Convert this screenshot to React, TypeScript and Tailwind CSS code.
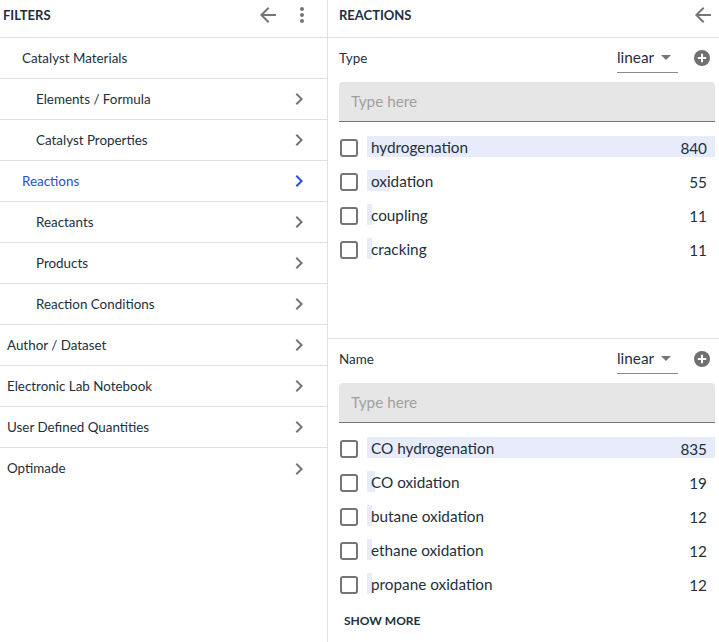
import React from "react";

const font = "font-['Lato','Noto_Sans',sans-serif]";

function Chevron({ blue }: { blue?: boolean }) {
  return (
    <svg width="24" height="24" viewBox="0 0 24 24" fill={blue ? "#2a4cdf" : "#757575"}>
      <path d="M10 6 8.59 7.41 13.17 12l-4.58 4.59L10 18l6-6z" />
    </svg>
  );
}

function ArrowBack() {
  return (
    <svg width="24" height="24" viewBox="0 0 24 24" fill="#757575">
      <path d="M20 11H7.83l5.59-5.59L12 4l-8 8 8 8 1.41-1.41L7.83 13H20v-2z" />
    </svg>
  );
}

function Dots() {
  return (
    <svg width="24" height="24" viewBox="0 0 24 24" fill="#757575">
      <path d="M12 8c1.1 0 2-.9 2-2s-.9-2-2-2-2 .9-2 2 .9 2 2 2zm0 2c-1.1 0-2 .9-2 2s.9 2 2 2 2-.9 2-2-.9-2-2-2zm0 6c-1.1 0-2 .9-2 2s.9 2 2 2 2-.9 2-2-.9-2-2-2z" />
    </svg>
  );
}

function Row({ label, indent, blue, noChevron, last }: { label: string; indent: string; blue?: boolean; noChevron?: boolean; last?: boolean }) {
  return (
    <div className={`h-[41px] shrink-0 flex items-center justify-between pr-[16px] ${last ? "" : "border-b border-[#e0e0e0]"} ${indent}`}>
      <span className={`text-[13.4px] ${blue ? "text-[#2a4cdf]" : "text-[#22303e]"}`}>{label}</span>
      {!noChevron && <Chevron blue={blue} />}
    </div>
  );
}

function Item({ label, count, pct }: { label: string; count: number; pct: number }) {
  return (
    <div className="h-[34px] flex items-center pl-[12px] pr-[4px]">
      <span className="w-[18px] h-[18px] mb-[1px] border-2 border-[#757575] rounded-[3px] shrink-0" />
      <div className="relative ml-[9px] flex-1 h-[21px] mb-[3px] flex items-center justify-between pl-[4px] pr-[8px]">
        <span className="absolute left-0 top-0 bottom-0 bg-[#e8ebfa]" style={{ width: `${pct}%` }} />
        <span className="relative top-[1px] text-[15.3px] text-[#22303e]">{label}</span>
        <span className="relative top-[2px] text-[15.3px] text-[#22303e]">{count}</span>
      </div>
    </div>
  );
}

function Facet({ title, items, more }: { title: string; items: [string, number, number][]; more?: boolean }) {
  return (
    <div className="flex flex-col">
      <div className="h-[44px] flex items-start pl-[11px] pr-[8px]">
        <span className="text-[13.4px] text-[#22303e] mt-[10px]">{title}</span>
        <div className="ml-auto mt-[8px] w-[61px] h-[27px] border-b border-[#8a8a8a] flex items-center justify-between pr-[7px] pb-[3px]">
          <span className="text-[15.3px] text-[#22303e]">linear</span>
          <span className="w-0 h-0 border-x-[5px] border-x-transparent border-t-[5px] border-t-[#757575]" />
        </div>
        <svg className="ml-[15px] mt-[11px]" width="18" height="18" viewBox="0 0 18 18">
          <circle cx="9" cy="9" r="8" fill="#707070" />
          <path d="M8 4.8h2V8h3.2v2H10v3.2H8V10H4.8V8H8z" fill="#ffffff" />
        </svg>
      </div>
      <div className="ml-[11px] mr-[4px] h-[40px] bg-[#e6e6e6] rounded-t-[4px] border-b border-[#757575] flex items-center pl-[12px]">
        <span className="text-[15.3px] text-[#a0a0a0]">Type here</span>
      </div>
      <div className="mt-[9px] flex flex-col">
        {items.map(([l, c, p]) => (
          <Item key={l} label={l} count={c} pct={p} />
        ))}
      </div>
      {more && <span className="ml-[16px] mt-[10px] text-[12px] font-bold text-[#22303e]">SHOW MORE</span>}
    </div>
  );
}

export default function App() {
  return (
    <div className={`w-[719px] h-[642px] flex bg-white overflow-hidden ${font}`}>
      <div className="w-[328px] shrink-0 border-r border-[#e0e0e0] flex flex-col">
        <div className="h-[38px] shrink-0 border-b border-[#e0e0e0] flex items-start pt-[3px] pl-[3px] pr-[13px]">
          <span className="text-[13px] font-bold leading-[24px] text-[#22303e]">FILTERS</span>
          <div className="ml-auto flex items-center gap-[10px]">
            <ArrowBack />
            <Dots />
          </div>
        </div>
        <Row label="Catalyst Materials" indent="pl-[22px]" noChevron />
        <Row label="Elements / Formula" indent="pl-[36px]" />
        <Row label="Catalyst Properties" indent="pl-[36px]" />
        <Row label="Reactions" indent="pl-[22px]" blue />
        <Row label="Reactants" indent="pl-[36px]" />
        <Row label="Products" indent="pl-[36px]" />
        <Row label="Reaction Conditions" indent="pl-[36px]" />
        <Row label="Author / Dataset" indent="pl-[7px]" />
        <Row label="Electronic Lab Notebook" indent="pl-[7px]" />
        <Row label="User Defined Quantities" indent="pl-[7px]" />
        <Row label="Optimade" indent="pl-[7px]" last />
      </div>
      <div className="flex-1 flex flex-col min-w-0">
        <div className="h-[38px] shrink-0 border-b border-[#e0e0e0] flex items-start pt-[3px] pl-[11px] pr-[4px]">
          <span className="text-[13px] font-bold leading-[24px] text-[#22303e]">REACTIONS</span>
          <div className="ml-auto flex">
            <ArrowBack />
          </div>
        </div>
        <div className="h-[301px] shrink-0 border-b border-[#e0e0e0]">
          <Facet
            title="Type"
            items={[
              ["hydrogenation", 840, 100],
              ["oxidation", 55, 6.6],
              ["coupling", 11, 1.5],
              ["cracking", 11, 1.5],
            ]}
          />
        </div>
        <Facet
          title="Name"
          more
          items={[
            ["CO hydrogenation", 835, 100],
            ["CO oxidation", 19, 2.3],
            ["butane oxidation", 12, 1.5],
            ["ethane oxidation", 12, 1.5],
            ["propane oxidation", 12, 1.5],
          ]}
        />
      </div>
    </div>
  );
}
